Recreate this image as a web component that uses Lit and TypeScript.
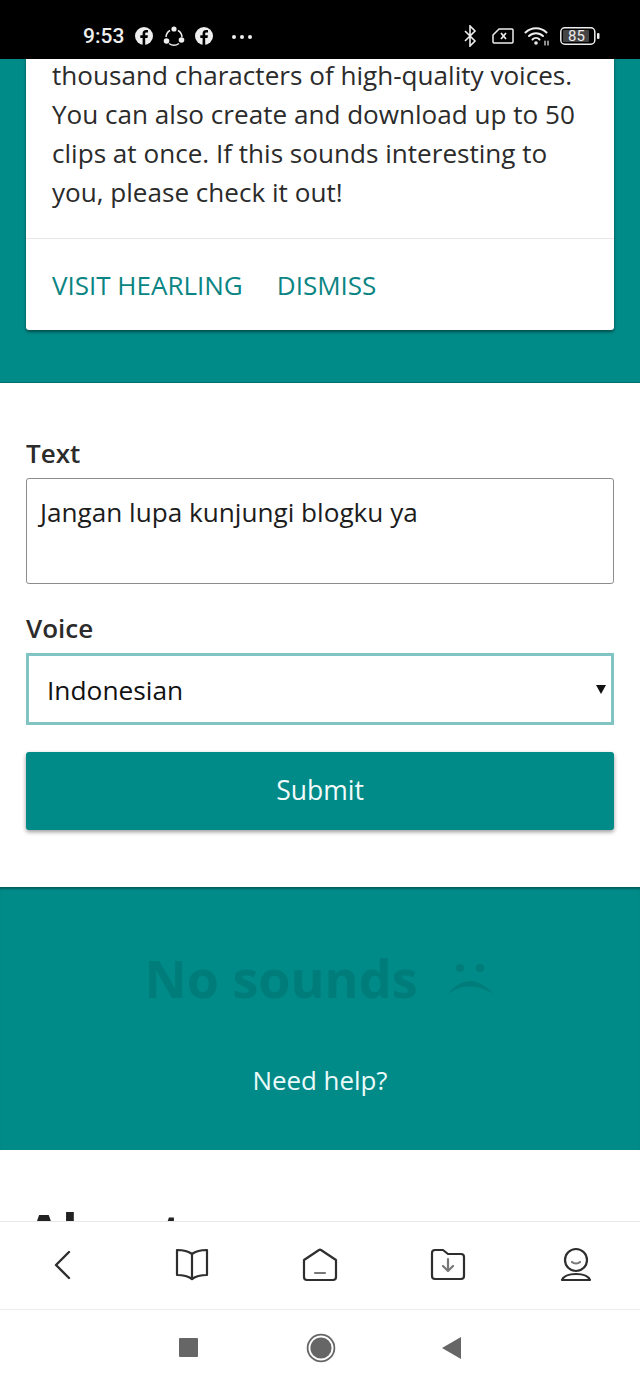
import { LitElement, html, css, svg } from "lit";
import { customElement } from "lit/decorators.js";

const fb = svg`<circle cx="9" cy="9" r="9" fill="#eee"/><path d="M10.2 18v-7h2.3l.4-2.7h-2.7V6.7c0-.8.3-1.3 1.4-1.3h1.4V3c-.3 0-1.1-.1-2-.1-2.1 0-3.4 1.2-3.4 3.500v1.9H5.3V11h2.3v7z" fill="#000"/>`;

@customElement("app-root")
export class AppRoot extends LitElement {
  static styles = css`
    :host { display: flex; flex-direction: column; width: 640px; height: 1386px; overflow: hidden; background: #fff; font-family: "Open Sans", "Noto Sans", sans-serif; color: #2b2b2b; }
    .status { height: 59px; box-sizing: border-box; flex: none; background: #000; color: #eee; display: flex; align-items: center; position: relative; z-index: 2; padding: 13px 40px 0 83px; font-family: Roboto, sans-serif; }
    .time { font-size: 21px; font-weight: 500; width: 52px; }
    .left { display: flex; align-items: center; gap: 10px; }
    .left svg { display: block; }
    .dots { display: flex; gap: 4px; margin: 2px 0 0 9px; }
    .dots i { width: 4px; height: 4px; border-radius: 50%; background: #eee; }
    .right { margin-left: auto; display: flex; align-items: center; gap: 10px; }
    .right svg { display: block; }
    .bt { margin-right: 5px; }
    .batt { position: relative; width: 40px; height: 18px; }
    .batt span { position: absolute; inset: 0 7px 0 0; display: flex; align-items: center; justify-content: center; font-size: 15px; color: #eee; }
    main { flex: 1; overflow: hidden; min-height: 0; }
    .hero { background: #008a88; padding: 0 26px 53px; box-shadow: inset 0 -1px 0 #00706e; }
    .card { background: #fff; border-radius: 0 0 3px 3px; box-shadow: 0 2px 3px rgba(0,0,0,.45); }
    .msg { margin: 0; padding: 0 26px 26px; font-size: 26.1px; line-height: 39px; margin-top: -3px; }
    .actions { border-top: 1px solid #e6e6e6; height: 91px; display: flex; align-items: center; gap: 34px; padding: 0 26px; font-size: 26px; color: #0b8583; }
    .form { padding: 50px 26px 57px; display: flex; flex-direction: column; }
    label { font-size: 26px; font-weight: 600; line-height: 40px; color: #2b2b2b; }
    .ta { height: 106px; box-sizing: border-box; border: 1px solid #8c8c8c; border-radius: 3px; padding: 12px 13px; font-size: 26.15px; line-height: 42px; color: #1c1c1c; margin: 5px 0 24px; }
    .sel { height: 72px; box-sizing: border-box; border: 3px solid #80c4c3; padding: 2px 5px 0 18px; display: flex; align-items: center; justify-content: space-between; font-size: 26.3px; color: #111; margin: 5px 0 27px; }
    .arrow { width: 0; height: 0; border-left: 5px solid transparent; border-right: 5px solid transparent; border-top: 9px solid #111; margin-bottom: 2px; }
    .btn { height: 78px; padding-bottom: 2px; box-sizing: border-box; border-radius: 3px; background: #008a88; color: #f2fbfb; display: flex; align-items: center; justify-content: center; font-size: 26.5px; box-shadow: 0 2px 4px rgba(0,0,0,.4); }
    .sounds { background: #008a88; height: 263px; box-shadow: inset 0 3px 2px -1px #00605f; display: flex; flex-direction: column; align-items: center; }
    .none { display: flex; align-items: center; gap: 30px; margin-top: 60px; height: 60px; font-size: 52px; font-weight: 700; color: #007c7a; }
    .none svg { margin-top: 6px; }
    .help { margin-top: 55px; font-size: 25.9px; color: #eafafa; }
    .about { padding: 52px 26px 0; margin: 0; font-size: 52px; font-weight: 700; line-height: 60px; color: #222; }
    .tabs { flex: none; height: 88px; box-sizing: border-box; padding-bottom: 2px; border-top: 1px solid #e8e8e8; display: grid; grid-template-columns: repeat(5, 128px); background: #fff; align-items: center; justify-items: center; position: relative; }
    .tabs svg { display: block; fill: none; stroke: #2e2e2e; stroke-width: 2.2; stroke-linecap: round; stroke-linejoin: round; }
    .sys { flex: none; height: 77px; box-sizing: border-box; border-top: 1px solid #ececec; background: #fff; display: flex; align-items: center; justify-content: center; padding: 0 0 1px 0; }
    .sys svg { display: block; }
    .sq { margin-right: 107px; }
    .tri { margin-left: 105px; margin-right: 1px; }
  `;

  render() {
    return html`
      <div class="status">
        <div class="time">9:53</div>
        <div class="left">
          <svg width="18" height="18" viewBox="0 0 18 18">${fb}</svg>
          <svg width="22" height="22" viewBox="0 0 22 22" fill="none" stroke="#eee" stroke-width="1.5"><path d="M7 5.500A8 8 0 0 0 3 12M15 5.500a8 8 0 0 1 4 6.500M6 18.500a8.500 8.500 0 0 0 10 0"/><circle cx="11" cy="4" r="2.600" fill="#eee" stroke="none"/><circle cx="3.500" cy="16" r="2.800" fill="#eee" stroke="none"/><circle cx="18.500" cy="15" r="2.800" fill="#eee" stroke="none"/></svg>
          <svg width="18" height="18" viewBox="0 0 18 18">${fb}</svg>
          <div class="dots"><i></i><i></i><i></i></div>
        </div>
        <div class="right">
          <svg class="bt" width="14" height="22" viewBox="0 0 14 22" fill="none" stroke="#eee" stroke-width="1.6"><path d="M2 6l10 10-5 5V1l5 5L2 16"/></svg>
          <svg width="22" height="16" viewBox="0 0 22 16" fill="none" stroke="#eee" stroke-width="1.5" stroke-linejoin="round"><path d="M7 1h13a1 1 0 0 1 1 1v12a1 1 0 0 1-1 1H2a1 1 0 0 1-1-1V7z"/><path d="M9 5l5 6M14 5l-5 6" stroke-width="1.7"/></svg>
          <svg width="26" height="20" viewBox="0 0 26 20" fill="none" stroke="#eee" stroke-width="2" stroke-linecap="round"><path d="M1.500 6.500a15 15 0 0 1 21 0M5 10a10 10 0 0 1 14 0M8.500 13.500a5 5 0 0 1 7 0"/><circle cx="12" cy="17" r="1.800" fill="#eee" stroke="none"/><path d="M21 15v4M24 15v4" stroke-width="1.2"/></svg>
          <div class="batt">
            <svg width="40" height="18" viewBox="0 0 40 18" fill="none"><rect x=".8" y=".8" width="34" height="16.4" rx="4" stroke="#eee" stroke-width="1.5"/><rect x="3" y="3" width="26" height="12" rx="1" fill="#444"/><rect x="37" y="6" width="2.500" height="6" rx="1" fill="#eee"/></svg>
            <span>85</span>
          </div>
        </div>
      </div>
      <main>
        <section class="hero">
          <div class="card">
            <p class="msg">thousand characters of high-quality voices. You can also create and download up to 50 clips at once. If this sounds interesting to you, please check it out!</p>
            <div class="actions"><span>VISIT HEARLING</span><span>DISMISS</span></div>
          </div>
        </section>
        <section class="form">
          <label>Text</label>
          <div class="ta">Jangan lupa kunjungi blogku ya</div>
          <label>Voice</label>
          <div class="sel"><span>Indonesian</span><i class="arrow"></i></div>
          <div class="btn">Submit</div>
        </section>
        <section class="sounds">
          <div class="none">
            <span>No sounds</span>
            <svg width="48" height="32" viewBox="0 0 48 32" fill="#007c7a"><circle cx="12" cy="4" r="4"/><circle cx="32" cy="4" r="4"/><path d="M0 30C8 20 16 17 22 17s14 3 23 13c-9-6-15-7.500-23-7.500S8 24 0 30z"/></svg>
          </div>
          <div class="help">Need help?</div>
        </section>
        <h2 class="about">About</h2>
      </main>
      <nav class="tabs">
        <svg width="24" height="32" viewBox="0 0 24 32"><path d="M17 3L4 16l13 13" stroke-width="2.4"/></svg>
        <svg width="36" height="34" viewBox="0 0 36 34"><path d="M18 6c-4-3-9-4-15-4v25c6 0 11 1 15 4 4-3 9-4 15-4V2c-6 0-11 1-15 4zM18 6v25"/></svg>
        <svg width="36" height="34" viewBox="0 0 36 34"><path d="M2 12L17 2a2 2 0 0 1 2 0l15 10v17a3 3 0 0 1-3 3H5a3 3 0 0 1-3-3z"/><path d="M13 25h10" stroke="#777"/></svg>
        <svg width="36" height="34" viewBox="0 0 36 34"><path d="M2 5a3 3 0 0 1 3-3h8l5 4h13a3 3 0 0 1 3 3v19a3 3 0 0 1-3 3H5a3 3 0 0 1-3-3z"/><path d="M18 11v11M13 18l5 5 5-5" stroke="#777" stroke-width="2.2"/></svg>
        <svg width="32" height="36" viewBox="0 0 32 36"><circle cx="16" cy="13" r="11"/><path d="M12 15c2 2 6 2 8 0" stroke="#777"/><path d="M2 33c2-5 8-6 14-6s12 1 14 6z"/></svg>
      </nav>
      <div class="sys">
        <svg class="sq" width="20" height="20" viewBox="0 0 20 20"><rect width="19" height="19" rx="1" fill="#666"/></svg>
        <svg width="30" height="30" viewBox="0 0 30 30"><circle cx="15" cy="15" r="13.4" fill="none" stroke="#666" stroke-width="1.8"/><circle cx="15" cy="15" r="10.6" fill="#666"/></svg>
        <svg class="tri" width="20" height="24" viewBox="0 0 20 24"><path d="M20 1v22L1 12z" fill="#666"/></svg>
      </div>
    `;
  }
}
